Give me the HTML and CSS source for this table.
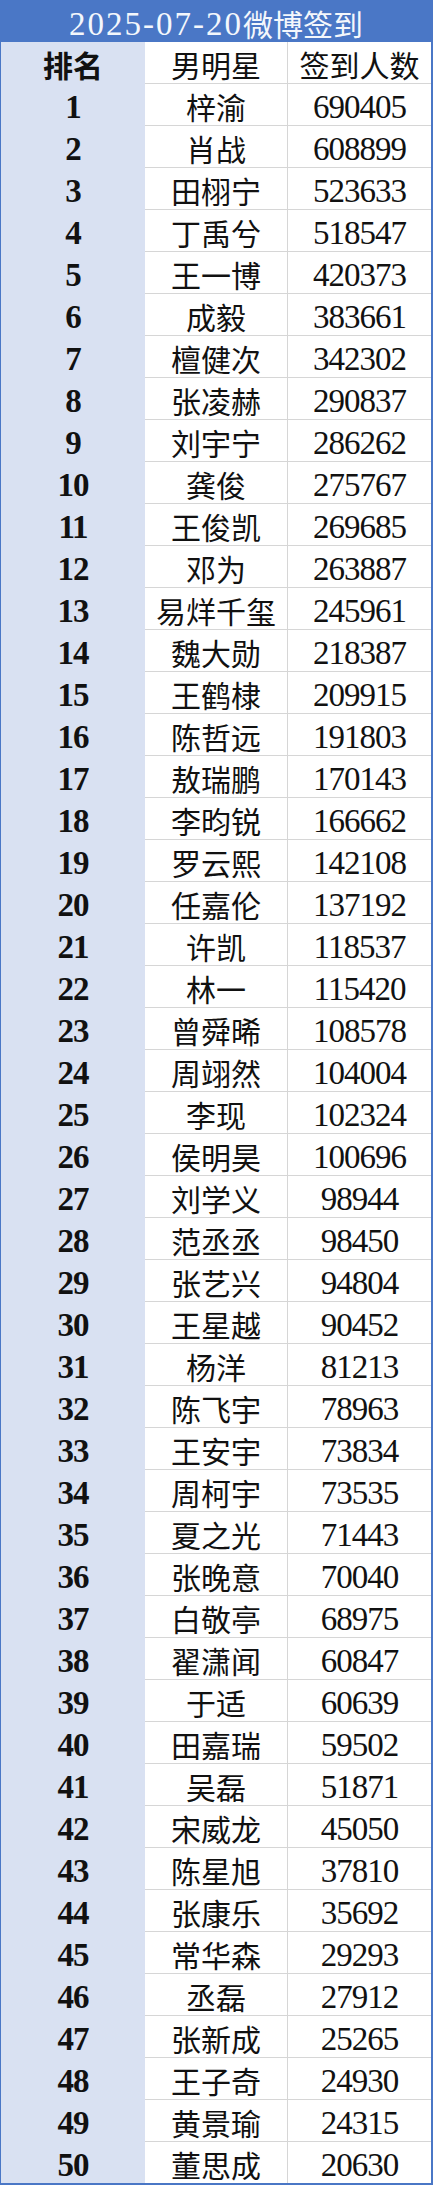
FILE: index.html
```html
<!DOCTYPE html>
<html lang="zh">
<head>
<meta charset="utf-8">
<link rel="stylesheet" href="styles.css">
</head>
<body>
<div class="sheet">
  <div class="title"><span class="date">2025-07-20</span><span class="cjk">微博签到</span></div>
  <div class="table">
    <div class="rank head">排名</div><div class="name">男明星</div><div class="num head-cjk">签到人数</div>
    <div class="rank">1</div><div class="name">梓渝</div><div class="num">690405</div>
    <div class="rank">2</div><div class="name">肖战</div><div class="num">608899</div>
    <div class="rank">3</div><div class="name">田栩宁</div><div class="num">523633</div>
    <div class="rank">4</div><div class="name">丁禹兮</div><div class="num">518547</div>
    <div class="rank">5</div><div class="name">王一博</div><div class="num">420373</div>
    <div class="rank">6</div><div class="name">成毅</div><div class="num">383661</div>
    <div class="rank">7</div><div class="name">檀健次</div><div class="num">342302</div>
    <div class="rank">8</div><div class="name">张凌赫</div><div class="num">290837</div>
    <div class="rank">9</div><div class="name">刘宇宁</div><div class="num">286262</div>
    <div class="rank">10</div><div class="name">龚俊</div><div class="num">275767</div>
    <div class="rank">11</div><div class="name">王俊凯</div><div class="num">269685</div>
    <div class="rank">12</div><div class="name">邓为</div><div class="num">263887</div>
    <div class="rank">13</div><div class="name">易烊千玺</div><div class="num">245961</div>
    <div class="rank">14</div><div class="name">魏大勋</div><div class="num">218387</div>
    <div class="rank">15</div><div class="name">王鹤棣</div><div class="num">209915</div>
    <div class="rank">16</div><div class="name">陈哲远</div><div class="num">191803</div>
    <div class="rank">17</div><div class="name">敖瑞鹏</div><div class="num">170143</div>
    <div class="rank">18</div><div class="name">李昀锐</div><div class="num">166662</div>
    <div class="rank">19</div><div class="name">罗云熙</div><div class="num">142108</div>
    <div class="rank">20</div><div class="name">任嘉伦</div><div class="num">137192</div>
    <div class="rank">21</div><div class="name">许凯</div><div class="num">118537</div>
    <div class="rank">22</div><div class="name">林一</div><div class="num">115420</div>
    <div class="rank">23</div><div class="name">曾舜晞</div><div class="num">108578</div>
    <div class="rank">24</div><div class="name">周翊然</div><div class="num">104004</div>
    <div class="rank">25</div><div class="name">李现</div><div class="num">102324</div>
    <div class="rank">26</div><div class="name">侯明昊</div><div class="num">100696</div>
    <div class="rank">27</div><div class="name">刘学义</div><div class="num">98944</div>
    <div class="rank">28</div><div class="name">范丞丞</div><div class="num">98450</div>
    <div class="rank">29</div><div class="name">张艺兴</div><div class="num">94804</div>
    <div class="rank">30</div><div class="name">王星越</div><div class="num">90452</div>
    <div class="rank">31</div><div class="name">杨洋</div><div class="num">81213</div>
    <div class="rank">32</div><div class="name">陈飞宇</div><div class="num">78963</div>
    <div class="rank">33</div><div class="name">王安宇</div><div class="num">73834</div>
    <div class="rank">34</div><div class="name">周柯宇</div><div class="num">73535</div>
    <div class="rank">35</div><div class="name">夏之光</div><div class="num">71443</div>
    <div class="rank">36</div><div class="name">张晚意</div><div class="num">70040</div>
    <div class="rank">37</div><div class="name">白敬亭</div><div class="num">68975</div>
    <div class="rank">38</div><div class="name">翟潇闻</div><div class="num">60847</div>
    <div class="rank">39</div><div class="name">于适</div><div class="num">60639</div>
    <div class="rank">40</div><div class="name">田嘉瑞</div><div class="num">59502</div>
    <div class="rank">41</div><div class="name">吴磊</div><div class="num">51871</div>
    <div class="rank">42</div><div class="name">宋威龙</div><div class="num">45050</div>
    <div class="rank">43</div><div class="name">陈星旭</div><div class="num">37810</div>
    <div class="rank">44</div><div class="name">张康乐</div><div class="num">35692</div>
    <div class="rank">45</div><div class="name">常华森</div><div class="num">29293</div>
    <div class="rank">46</div><div class="name">丞磊</div><div class="num">27912</div>
    <div class="rank">47</div><div class="name">张新成</div><div class="num">25265</div>
    <div class="rank">48</div><div class="name">王子奇</div><div class="num">24930</div>
    <div class="rank">49</div><div class="name">黄景瑜</div><div class="num">24315</div>
    <div class="rank last">50</div><div class="name last">董思成</div><div class="num last">20630</div>
  </div>
</div>
</body>
</html>
```

FILE: styles.css
```css
* { box-sizing: border-box; }
html, body { margin: 0; padding: 0; background: #ffffff; }
.sheet {
  width: 433px;
  height: 2185px;
  border-left: 1px solid #4a77c6;
  border-right: 2px solid #4a77c6;
  border-bottom: 2px solid #4a77c6;
  font-family: "Liberation Serif", "Noto Sans CJK SC", serif;
  color: #111111;
  overflow: hidden;
}
.title {
  height: 42px;
  background: #4a77c6;
  color: #f4f7fc;
  font-size: 33px;
  line-height: 36px;
  padding-top: 6px;
  text-align: center;
  white-space: nowrap;
}
.title .date { letter-spacing: 2px; }
.title .cjk { font-size: 30px; position: relative; top: 1px; }
.table {
  display: grid;
  grid-template-columns: 144px 143px 143px;
  grid-auto-rows: 42px;
}
.table > div {
  font-size: 33px;
  letter-spacing: -1px;
  line-height: 35px;
  padding-top: 6px;
  text-align: center;
  white-space: nowrap;
}
.rank {
  background: #d9e1f2;
  font-weight: bold;
}
.name, .num {
  border-bottom: 1px solid #d6d6d6;
}
.table > .name {
  border-right: 1px solid #d6d6d6;
  font-size: 30px;
  letter-spacing: 0;
  line-height: 33px;
  padding-top: 8px;
}
.table > .head {
  font-size: 30px;
  letter-spacing: 0;
  line-height: 33px;
  padding-top: 8px;
}
.table > .head-cjk {
  font-size: 30px;
  letter-spacing: 0;
  line-height: 33px;
  padding-top: 8px;
}
.table > .last { border-bottom: none; }
```
